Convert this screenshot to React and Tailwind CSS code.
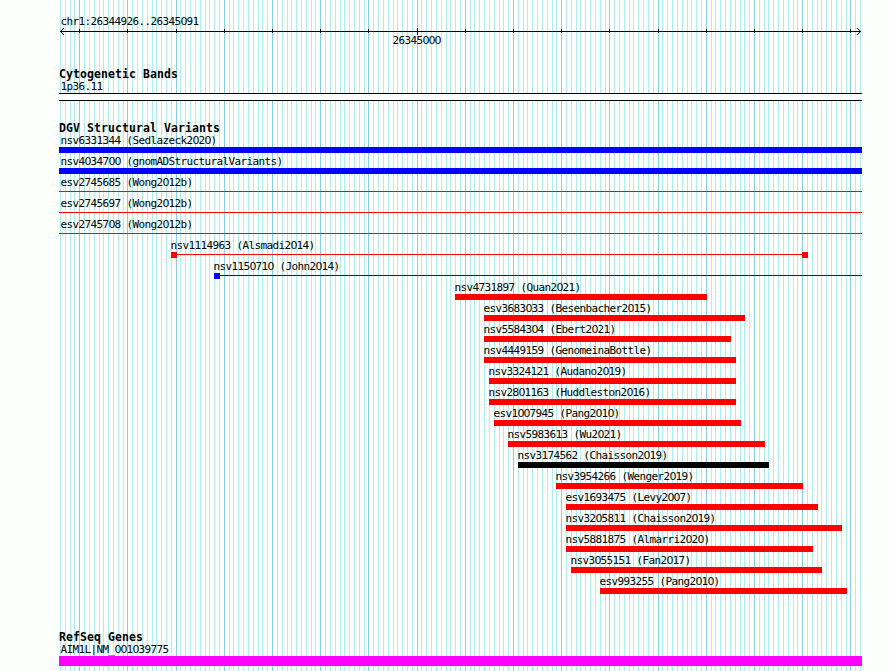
import { Fragment } from "react";

// Genomic window shown by the browser
const START = 26344926;
const SPAN = 166;
const ORIGIN = 60;
const PX_PER_BASE = 800 / SPAN;

const BASES = Array.from({ length: SPAN + 1 }, (_, i) => ({
  x: Math.round(ORIGIN + i * PX_PER_BASE),
  pos: START + i,
}));

// from / to are track pixels, "shape" defaults to a solid bar
const VARIANTS = [
  { name: "nsv6331344 (Sedlazeck2020)", from: 59, to: 862, color: "#0000ff" },
  { name: "nsv4034700 (gnomADStructuralVariants)", from: 59, to: 862, color: "#0000ff" },
  { name: "esv2745685 (Wong2012b)", from: 59, to: 862, color: "#ff0000", shape: "line" },
  { name: "esv2745697 (Wong2012b)", from: 59, to: 862, color: "#ff0000", shape: "line" },
  { name: "esv2745708 (Wong2012b)", from: 59, to: 862, color: "#ff0000", shape: "line" },
  { name: "nsv1114963 (Alsmadi2014)", from: 171, to: 808, color: "#ff0000", shape: "both" },
  { name: "nsv1150710 (John2014)", from: 214, to: 862, color: "#0000ff", shape: "left" },
  { name: "nsv4731897 (Quan2021)", from: 455, to: 707, color: "#ff0000" },
  { name: "esv3683033 (Besenbacher2015)", from: 484, to: 745, color: "#ff0000" },
  { name: "nsv5584304 (Ebert2021)", from: 484, to: 731, color: "#ff0000" },
  { name: "nsv4449159 (GenomeinaBottle)", from: 484, to: 736, color: "#ff0000" },
  { name: "nsv3324121 (Audano2019)", from: 489, to: 736, color: "#ff0000" },
  { name: "nsv2801163 (Huddleston2016)", from: 489, to: 736, color: "#ff0000" },
  { name: "esv1007945 (Pang2010)", from: 494, to: 741, color: "#ff0000" },
  { name: "nsv5983613 (Wu2021)", from: 508, to: 765, color: "#ff0000" },
  { name: "nsv3174562 (Chaisson2019)", from: 518, to: 769, color: "#000000" },
  { name: "nsv3954266 (Wenger2019)", from: 556, to: 803, color: "#ff0000" },
  { name: "esv1693475 (Levy2007)", from: 566, to: 818, color: "#ff0000" },
  { name: "nsv3205811 (Chaisson2019)", from: 566, to: 842, color: "#ff0000" },
  { name: "nsv5881875 (Almarri2020)", from: 566, to: 813, color: "#ff0000" },
  { name: "nsv3055151 (Fan2017)", from: 571, to: 822, color: "#ff0000" },
  { name: "esv993255 (Pang2010)", from: 600, to: 847, color: "#ff0000" },
];

// The mono face dots its zeros, so those come from the sans face
function Label({ children }) {
  const parts = children.split("0");
  return (
    <div className="h-3 pl-[0.5px] text-[11px] leading-[11px] tracking-[-0.62px] whitespace-pre">
      {parts.map((part, i) => (
        <Fragment key={i}>
          {i > 0 && <span className="font-['DejaVu_Sans',sans-serif] tracking-[-1px]">0</span>}
          {part}
        </Fragment>
      ))}
    </div>
  );
}

function Heading({ children }) {
  return (
    <h2 className="h-3 pl-[59px] text-[11.5px] leading-[11px] font-bold tracking-[0.08px] whitespace-pre">{children}</h2>
  );
}

function Grid() {
  return (
    <svg className="absolute inset-0" width="890" height="671" shapeRendering="crispEdges">
      {BASES.map(({ x, pos }) => (
        <rect key={pos} x={x} y="0" width="1" height="671" fill={pos % 10 === 0 ? "#87ceeb" : "#afeeee"} />
      ))}
    </svg>
  );
}

function Ruler() {
  return (
    <svg className="block" width="890" height="7" shapeRendering="crispEdges">
      <rect x="60" y="3" width="801" height="1" />
      {BASES.filter(({ pos }) => pos % 10 === 0).map(({ x, pos }) => (
        <rect key={pos} x={x} y={pos % 100 === 0 ? 0 : 1} width="1" height={pos % 100 === 0 ? 7 : 4} />
      ))}
      {/* Arrow heads */}
      {[0, 1, 2, 3].map((d) => (
        <Fragment key={d}>
          <rect x={60 + d} y={3 - d} width="1" height="1" />
          <rect x={60 + d} y={3 + d} width="1" height="1" />
          <rect x={860 - d} y={3 - d} width="1" height="1" />
          <rect x={860 - d} y={3 + d} width="1" height="1" />
        </Fragment>
      ))}
    </svg>
  );
}

function Glyph({ shape, color, width }) {
  if (!shape) return <div className="h-1.5" style={{ width, backgroundColor: color }} />;
  return (
    <div className="flex h-1.5" style={{ width }}>
      {shape !== "line" && <div className="size-1.5" style={{ backgroundColor: color }} />}
      <div className="mt-0.5 h-px flex-1" style={{ backgroundColor: color }} />
      {shape === "both" && <div className="size-1.5" style={{ backgroundColor: color }} />}
    </div>
  );
}

function Variant({ name, from, to, color, shape }) {
  return (
    <div className="h-[21px]" style={{ paddingLeft: from }}>
      <div className={from === 59 ? "pl-px" : "-ml-px"}>
        <Label>{name}</Label>
      </div>
      <Glyph shape={shape} color={color} width={to - from} />
    </div>
  );
}

export default function App() {
  return (
    <div className="relative h-[671px] w-[890px] overflow-hidden bg-[#fdfffc] font-['DejaVu_Sans_Mono',monospace] text-black">
      <Grid />

      <div className="relative pt-4">
        {/* Scale */}
        <div className="pl-[60px]">
          <Label>chr1:26344926..26345091</Label>
        </div>
        <Ruler />
        <div className="pl-[392px]">
          <Label>26345000</Label>
        </div>

        {/* Cytogenetic bands */}
        <section className="mt-[22px]">
          <Heading>Cytogenetic Bands</Heading>
          <div className="pl-[60px]">
            <Label>1p36.11</Label>
          </div>
          <div className="ml-[59px] h-2 w-[803px] border-y border-black bg-[#fdfffc]" />
        </section>

        {/* Structural variants */}
        <section className="mt-[22px]">
          <Heading>DGV Structural Variants</Heading>
          {VARIANTS.map((v) => (
            <Variant key={v.name} {...v} />
          ))}
        </section>

        {/* Genes */}
        <section className="mt-[35px]">
          <Heading>RefSeq Genes</Heading>
          <div className="pl-[60px]">
            <Label>AIM1L|NM_001039775</Label>
          </div>
          <div className="ml-[59px] h-2.5 w-[803px] bg-[#ff00ff]" />
        </section>
      </div>
    </div>
  );
}
